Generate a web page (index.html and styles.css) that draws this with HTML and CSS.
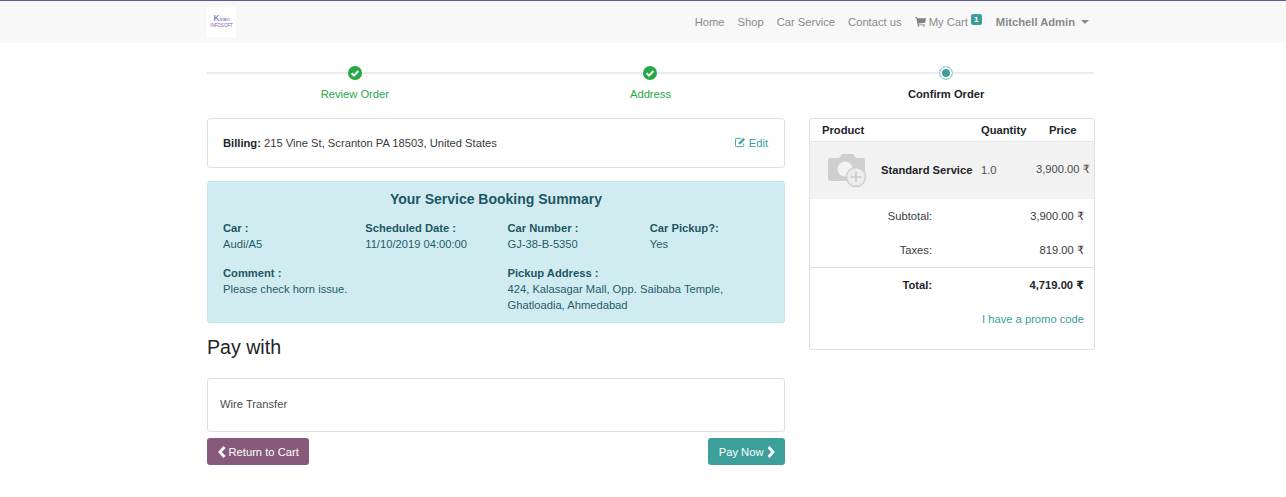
FILE: index.html
```html
<!DOCTYPE html>
<html lang="en">
<head>
    <meta charset="UTF-8">
    <title>Shop - Payment</title>
    <link rel="stylesheet" href="styles.css">
</head>
<body>
    <header class="navbar">
        <div class="wrap navbar-inner">
            <a class="logo" href="#"><span class="logo-top"><span class="logo-k">K</span>iran</span><span class="logo-bottom">INFOSOFT</span></a>
            <nav class="nav">
                <a href="#">Home</a>
                <a href="#">Shop</a>
                <a href="#">Car Service</a>
                <a href="#">Contact us</a>
                <a href="#" class="cart">
                    <svg class="icon-cart" viewBox="0 0 16 14"><path d="M0 0h3l.5 1.6H16l-1.4 6.6-9.6 1 .3 1.3h9.4v1.3H3.9L2 1.3H0z"/><circle cx="5" cy="12.8" r="1.2"/><circle cx="13" cy="12.8" r="1.2"/></svg>
                    My Cart<span class="badge">1</span>
                </a>
                <a href="#" class="user">Mitchell Admin<span class="caret"></span></a>
            </nav>
        </div>
    </header>

    <main class="wrap">
        <div class="wizard">
            <div class="step done">
                <span class="dot"><svg viewBox="0 0 14 14"><circle cx="7" cy="7" r="7"/><path class="tick" d="M3.6 7.2l2.4 2.4 4.4-4.6"/></svg></span>
                <span class="step-label">Review Order</span>
            </div>
            <div class="step done">
                <span class="dot"><svg viewBox="0 0 14 14"><circle cx="7" cy="7" r="7"/><path class="tick" d="M3.6 7.2l2.4 2.4 4.4-4.6"/></svg></span>
                <span class="step-label">Address</span>
            </div>
            <div class="step current">
                <span class="dot"><span class="ring"></span></span>
                <span class="step-label">Confirm Order</span>
            </div>
        </div>

        <div class="columns">
            <section class="col-main">
                <div class="card billing">
                    <div><b>Billing:</b> 215 Vine St, Scranton PA 18503, United States</div>
                    <a href="#" class="edit">
                        <svg class="icon-edit" viewBox="0 0 12 12"><path class="edit-box" d="M9.5 7v2.5a1 1 0 0 1-1 1h-7a1 1 0 0 1-1-1v-7a1 1 0 0 1 1-1H7"/><path d="M4 6.2L9.2 1l1.8 1.8L5.8 8H4z"/></svg>
                        Edit
                    </a>
                </div>

                <div class="summary">
                    <h4>Your Service Booking Summary</h4>
                    <div class="summary-row">
                        <div class="field"><b>Car :</b><span>Audi/A5</span></div>
                        <div class="field"><b>Scheduled Date :</b><span>11/10/2019 04:00:00</span></div>
                        <div class="field"><b>Car Number :</b><span>GJ-38-B-5350</span></div>
                        <div class="field"><b>Car Pickup?:</b><span>Yes</span></div>
                    </div>
                    <div class="summary-row second">
                        <div class="field wide"><b>Comment :</b><span>Please check horn issue.</span></div>
                        <div class="field wide"><b>Pickup Address :</b><span>424, Kalasagar Mall, Opp. Saibaba Temple, Ghatloadia, Ahmedabad</span></div>
                    </div>
                </div>

                <h3 class="pay-title">Pay with</h3>
                <div class="card payment">Wire Transfer</div>

                <div class="actions">
                    <a href="#" class="btn btn-back">
                        <svg class="chev" viewBox="0 0 8 12"><path d="M6.5 1L2 6l4.500 5"/></svg>
                        Return to Cart
                    </a>
                    <a href="#" class="btn btn-pay">
                        Pay Now
                        <svg class="chev" viewBox="0 0 8 12"><path d="M1.500 1L6 6l-4.500 5"/></svg>
                    </a>
                </div>
            </section>

            <aside class="card order">
                <div class="order-head">
                    <b class="c-product">Product</b>
                    <b class="c-qty">Quantity</b>
                    <b class="c-price">Price</b>
                </div>
                <div class="order-line">
                    <svg class="placeholder" viewBox="0 0 40 36">
                        <path d="M3 6h9l3-4h11l3 4h7a2 2 0 0 1 2 2v19a2 2 0 0 1-2 2H3a2 2 0 0 1-2-2V8a2 2 0 0 1 2-2z"/>
                        <circle class="lens" cx="18" cy="17" r="7.500"/>
                        <circle class="plus-bg" cx="29" cy="25" r="9.500"/>
                        <path class="plus" d="M29 19.500v11M23.500 25h11"/>
                    </svg>
                    <b class="line-name">Standard Service</b>
                    <span class="line-qty">1.0</span>
                    <span class="line-price">3,900.00 <span class="rupee">₹</span></span>
                </div>
                <div class="totals">
                    <div class="total-row"><span>Subtotal:</span><span>3,900.00 <span class="rupee">₹</span></span></div>
                    <div class="total-row"><span>Taxes:</span><span>819.00 <span class="rupee">₹</span></span></div>
                    <div class="total-row grand"><b>Total:</b><b>4,719.00 <span class="rupee">₹</span></b></div>
                </div>
                <a href="#" class="promo">I have a promo code</a>
            </aside>
        </div>
    </main>
</body>
</html>
```

FILE: styles.css
```css
* {
    margin: 0;
    padding: 0;
    box-sizing: border-box;
}
html, body {
    height: 100%;
    overflow: hidden;
}
body {
    font-family: "Liberation Sans", Arial, sans-serif;
    font-size: 11.2px;
    line-height: 16px;
    color: #4c4c4c;
    background: #fff;
}
a {
    text-decoration: none;
    color: #38a0a0;
}
b {
    color: #212529;
}
.rupee {
    font-family: "DejaVu Sans", sans-serif;
}
.wrap {
    width: 888px;
    margin-left: 207px;
}

/* Navbar */
.navbar {
    height: 43px;
    background: #f8f8f8;
    border-top: 1px solid #5b5a9b;
}
.navbar-inner {
    display: flex;
    justify-content: space-between;
    align-items: center;
    height: 42px;
}
.logo {
    width: 29px;
    height: 30px;
    background: #fff;
    display: flex;
    flex-direction: column;
    align-items: center;
    justify-content: center;
    line-height: 6px;
}
.logo-top {
    font-size: 6px;
    color: #5b6cc0;
}
.logo-k {
    font-size: 9px;
    color: #3f55b5;
}
.logo-bottom {
    margin-top: 1px;
    font-size: 4.500px;
    color: #7d62b5;
}
.nav {
    display: flex;
    align-items: center;
    gap: 13px;
    padding-right: 6px;
}
.nav a {
    color: #8a8a8a;
    white-space: nowrap;
}
.icon-cart {
    width: 11px;
    height: 10px;
    fill: #808080;
    vertical-align: -1px;
}
.cart {
    padding-right: 1px;
}
.badge {
    position: relative;
    top: -4px;
    display: inline-block;
    margin-left: 3px;
    width: 11px;
    height: 11px;
    border-radius: 2px;
    background: #3d9f9a;
    color: #fff;
    font-size: 8px;
    font-weight: bold;
    line-height: 11px;
    text-align: center;
}
.user {
    font-weight: bold;
}
.caret {
    display: inline-block;
    margin-left: 6px;
    vertical-align: 2px;
    border-top: 4px solid #8a8a8a;
    border-left: 4px solid transparent;
    border-right: 4px solid transparent;
}

/* Wizard */
.wizard {
    display: grid;
    grid-template-columns: repeat(3, 1fr);
    width: 887px;
    margin-top: 22px;
    background: linear-gradient(#e9ecef, #e9ecef) 0 7px / 100% 2px no-repeat;
}
.step {
    display: flex;
    flex-direction: column;
    align-items: center;
}
.dot {
    display: block;
    width: 14px;
    height: 14px;
    margin-top: 1px;
    background: #fff;
    border-radius: 50%;
}
.dot svg {
    display: block;
    width: 14px;
    height: 14px;
    fill: #28a745;
}
.tick {
    fill: none;
    stroke: #fff;
    stroke-width: 2;
}
.ring {
    display: block;
    width: 14px;
    height: 14px;
    border-radius: 50%;
    border: 1px solid #a5d6d3;
    background: #3d9f9a;
    box-shadow: inset 0 0 0 2px #fff;
}
.step-label {
    margin-top: 6px;
}
.done .step-label {
    color: #28a745;
}
.current .step-label {
    font-weight: bold;
    color: #212529;
}

/* Columns */
.columns {
    display: flex;
    align-items: flex-start;
    gap: 24px;
    margin-top: 16px;
}
.col-main {
    width: 578px;
}
.card {
    background: #fff;
    border: 1px solid #e0e0e0;
    border-radius: 3px;
}
.billing {
    display: flex;
    justify-content: space-between;
    align-items: center;
    height: 50px;
    padding: 0 16px 0 15px;
    color: #3a3a3a;
}
.icon-edit {
    width: 11px;
    height: 11px;
    vertical-align: -1px;
    fill: #38a0a0;
}
.edit-box {
    fill: none;
    stroke: #38a0a0;
    stroke-width: 1;
}

/* Summary box */
.summary {
    height: 142px;
    margin-top: 13px;
    padding: 9px 15px 0;
    background: #d1ecf1;
    border: 1px solid #bee5eb;
    border-radius: 3px;
    color: #1f5d69;
}
.summary h4 {
    font-size: 14px;
    line-height: 17px;
    text-align: center;
    color: #1c5766;
}
.summary b {
    color: #1c5766;
}
.summary-row {
    display: grid;
    grid-template-columns: repeat(4, 142.250px);
    margin-top: 12px;
}
.summary-row.second {
    grid-template-columns: repeat(2, 284.500px);
    margin-top: 13px;
}
.field b,
.field span {
    display: block;
}
.wide span {
    padding-right: 40px;
}

.pay-title {
    margin-top: 12px;
    font-size: 19.600px;
    font-weight: normal;
    line-height: 24px;
    color: #212529;
}
.payment {
    height: 54px;
    margin-top: 19px;
    padding: 0 12px 2px;
    display: flex;
    align-items: center;
}

/* Buttons */
.actions {
    display: flex;
    justify-content: space-between;
    margin-top: 6px;
}
.btn {
    display: flex;
    align-items: center;
    gap: 3px;
    height: 27px;
    padding: 0 10.500px;
    border-radius: 3px;
    color: #fff;
}
.btn-back {
    background: #875a7b;
}
.btn-pay {
    background: #3d9f9a;
}
.chev {
    width: 8px;
    height: 12px;
    fill: none;
    stroke: #fff;
    stroke-width: 2.800;
}

/* Order card */
.order {
    width: 286px;
    height: 232px;
    color: #4c4c4c;
}
.order-head {
    display: flex;
    align-items: center;
    height: 22px;
    padding-left: 12px;
}
.c-product {
    width: 159px;
}
.c-qty {
    width: 68px;
}
.order-line {
    display: flex;
    align-items: center;
    height: 58px;
    padding: 0 0 2px 17px;
    background: #f2f2f2;
    border-top: 1px solid #e6e6e6;
}
.placeholder {
    width: 40px;
    height: 36px;
    margin-right: 14px;
    fill: #cfcfcf;
}
.lens {
    fill: #f2f2f2;
    stroke: none;
}
.plus-bg {
    fill: #ececec;
    stroke: #cfcfcf;
    stroke-width: 1.500;
}
.plus {
    fill: none;
    stroke: #c8c8c8;
    stroke-width: 1.500;
}
.line-name {
    width: 100px;
    white-space: nowrap;
}
.line-qty {
    width: 55px;
}
.line-price {
    white-space: nowrap;
}
.total-row {
    display: grid;
    grid-template-columns: 122px 152px;
    align-items: center;
    height: 34px;
    text-align: right;
    color: #3a3a3a;
}
.grand {
    height: 35px;
    border-top: 1px solid #dcdcdc;
}
.promo {
    display: block;
    margin-top: 9px;
    padding-right: 10px;
    text-align: right;
}
```
